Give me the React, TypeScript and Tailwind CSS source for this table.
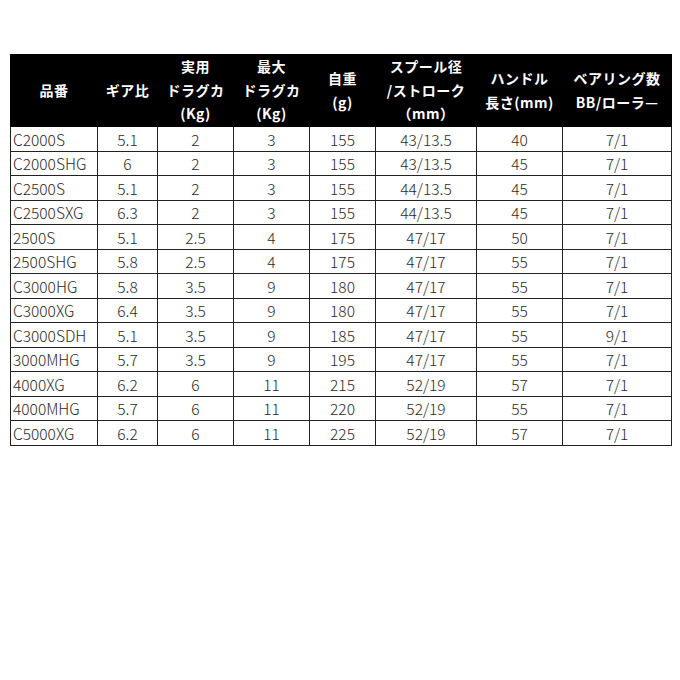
import React from "react";

const cols = [87, 60, 76, 76, 66, 101, 86, 109];

const headers: string[][] = [
  ["品番"],
  ["ギア比"],
  ["実用", "ドラグカ", "(Kg)"],
  ["最大", "ドラグカ", "(Kg)"],
  ["自重", "(g)"],
  ["スプール径", "/ストローク", "（mm）"],
  ["ハンドル", "長さ(mm)"],
  ["ベアリング数", "BB/ローラ—"],
];

const rows: string[][] = [
  ["C2000S", "5.1", "2", "3", "155", "43/13.5", "40", "7/1"],
  ["C2000SHG", "6", "2", "3", "155", "43/13.5", "45", "7/1"],
  ["C2500S", "5.1", "2", "3", "155", "44/13.5", "45", "7/1"],
  ["C2500SXG", "6.3", "2", "3", "155", "44/13.5", "45", "7/1"],
  ["2500S", "5.1", "2.5", "4", "175", "47/17", "50", "7/1"],
  ["2500SHG", "5.8", "2.5", "4", "175", "47/17", "55", "7/1"],
  ["C3000HG", "5.8", "3.5", "9", "180", "47/17", "55", "7/1"],
  ["C3000XG", "6.4", "3.5", "9", "180", "47/17", "55", "7/1"],
  ["C3000SDH", "5.1", "3.5", "9", "185", "47/17", "55", "9/1"],
  ["3000MHG", "5.7", "3.5", "9", "195", "47/17", "55", "7/1"],
  ["4000XG", "6.2", "6", "11", "215", "52/19", "57", "7/1"],
  ["4000MHG", "5.7", "6", "11", "220", "52/19", "55", "7/1"],
  ["C5000XG", "6.2", "6", "11", "225", "52/19", "57", "7/1"],
];

export default function App() {
  return (
    <div className="w-[680px] h-[680px] bg-white pt-[54px] pl-[10px] font-['Noto_Sans_CJK_JP',sans-serif]">
      <table className="border-collapse table-fixed w-[661px]">
        <colgroup>
          {cols.map((w, i) => (
            <col key={i} style={{ width: w }} />
          ))}
        </colgroup>
        <thead>
          <tr className="bg-black h-[72px]">
            {headers.map((h, i) => (
              <th
                key={i}
                className="p-0 text-white text-[14px] font-bold leading-[23.5px] tracking-[0.5px] text-center align-middle border border-black"
              >
                {h.map((l, j) => (
                  <div key={j} className="whitespace-nowrap">
                    {l}
                  </div>
                ))}
              </th>
            ))}
          </tr>
        </thead>
        <tbody>
          {rows.map((r, i) => (
            <tr key={i} className="h-[24.5px]">
              {r.map((c, j) => (
                <td
                  key={j}
                  className={
                    "p-0 border border-[#222] text-[15.5px] leading-[22px] text-[#2a2a2a] font-light " +
                    (j === 0 ? "text-left pl-[2px]" : "text-center")
                  }
                >
                  {c}
                </td>
              ))}
            </tr>
          ))}
        </tbody>
      </table>
    </div>
  );
}
